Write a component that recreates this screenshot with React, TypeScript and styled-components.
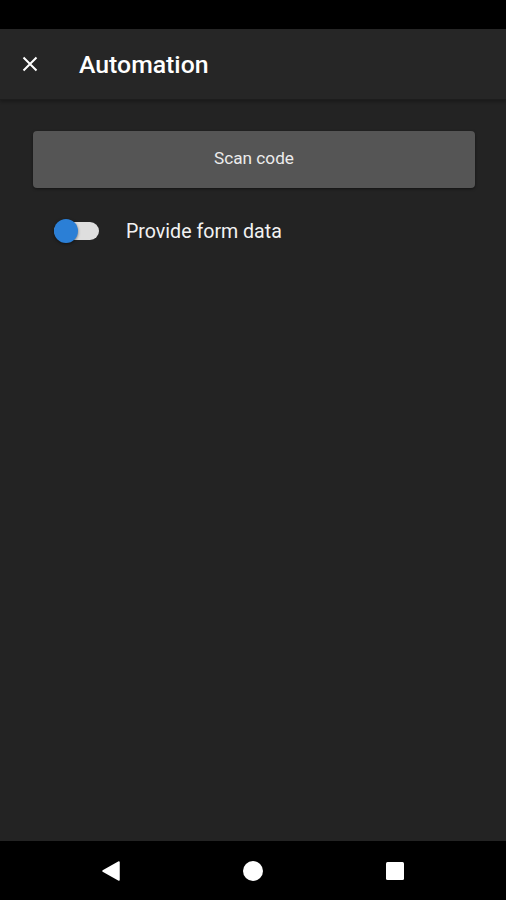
import React, { useState } from "react";
import styled, { createGlobalStyle } from "styled-components";

const GlobalStyle = createGlobalStyle`
  html, body { margin: 0; padding: 0; background: #000; }
  body { font-family: Roboto, "Noto Sans", "Liberation Sans", sans-serif; }
  * { box-sizing: border-box; }
`;

const Screen = styled.div`
  width: 506px;
  height: 900px;
  display: flex;
  flex-direction: column;
  background: #232323;
  overflow: hidden;
`;

const StatusBar = styled.div`
  height: 29px;
  flex-shrink: 0;
  background: #000;
`;

const AppBar = styled.header`
  height: 71px;
  flex-shrink: 0;
  display: flex;
  align-items: center;
  background: #262626;
  border-bottom: 1px solid #1d1d1d;
  box-shadow: 0 2px 3px rgba(0, 0, 0, 0.25);
  position: relative;
  z-index: 1;
`;

const CloseButton = styled.button`
  width: 60px;
  height: 60px;
  display: flex;
  align-items: center;
  justify-content: center;
  background: none;
  border: none;
  padding: 0;
  color: #fff;
`;

const Title = styled.h1`
  margin: 0 0 0 19px;
  font-size: 24.8px;
  font-weight: 500;
  color: #fff;
`;

const Body = styled.main`
  flex: 1;
  display: flex;
  flex-direction: column;
  padding: 31px 31px 0 33px;
  gap: 21px;
`;

const ActionButton = styled.button`
  height: 57px;
  width: 100%;
  border: none;
  border-radius: 4px;
  padding: 0 0 3px;
  background: #555555;
  color: #ececec;
  font-family: inherit;
  font-size: 17.2px;
  box-shadow: 0 1px 3px rgba(0, 0, 0, 0.45);
`;

const SwitchRow = styled.label`
  display: flex;
  align-items: center;
  height: 44px;
  gap: 27px;
  padding-left: 21px;
  color: #f2f2f2;
  font-size: 19.6px;
`;

const Track = styled.span<{ $on: boolean }>`
  position: relative;
  width: 45px;
  height: 18px;
  border-radius: 9px;
  background: ${({ $on }) => ($on ? "#8fbde9" : "#dedede")};
  display: inline-block;
  flex-shrink: 0;
`;

const Thumb = styled.span<{ $on: boolean }>`
  position: absolute;
  top: -3px;
  left: ${({ $on }) => ($on ? "21px" : "0px")};
  width: 24px;
  height: 24px;
  border-radius: 50%;
  background: #2b7fd6;
  box-shadow: 0 1px 3px rgba(0, 0, 0, 0.5);
`;

const NavBar = styled.nav`
  height: 59px;
  flex-shrink: 0;
  background: #000;
  display: flex;
  align-items: center;
  justify-content: center;
`;

const NavSlot = styled.div`
  width: 142px;
  display: flex;
  justify-content: center;
  align-items: center;
`;

export default function App() {
  const [on, setOn] = useState(false);
  return (
    <>
      <GlobalStyle />
      <Screen>
        <StatusBar />
        <AppBar>
          <CloseButton aria-label="Close">
            <svg width="16" height="16" viewBox="0 0 16 16">
              <path d="M1.5 1.5 L14.5 14.5 M14.5 1.5 L1.5 14.5" stroke="#fff" strokeWidth="2" />
            </svg>
          </CloseButton>
          <Title>Automation</Title>
        </AppBar>
        <Body>
          <ActionButton>Scan code</ActionButton>
          <SwitchRow onClick={() => setOn(!on)}>
            <Track $on={on}>
              <Thumb $on={on} />
            </Track>
            Provide form data
          </SwitchRow>
        </Body>
        <NavBar>
          <NavSlot>
            <svg width="20" height="22" viewBox="0 0 20 22">
              <path d="M18 2 L18 20 L2 11 Z" fill="#fff" stroke="#fff" strokeWidth="1.5" strokeLinejoin="round" />
            </svg>
          </NavSlot>
          <NavSlot>
            <svg width="22" height="22" viewBox="0 0 22 22">
              <circle cx="11" cy="11" r="10" fill="#fff" />
            </svg>
          </NavSlot>
          <NavSlot>
            <svg width="20" height="20" viewBox="0 0 20 20">
              <rect x="1" y="1" width="18" height="18" rx="1.5" fill="#fff" />
            </svg>
          </NavSlot>
        </NavBar>
      </Screen>
    </>
  );
}
